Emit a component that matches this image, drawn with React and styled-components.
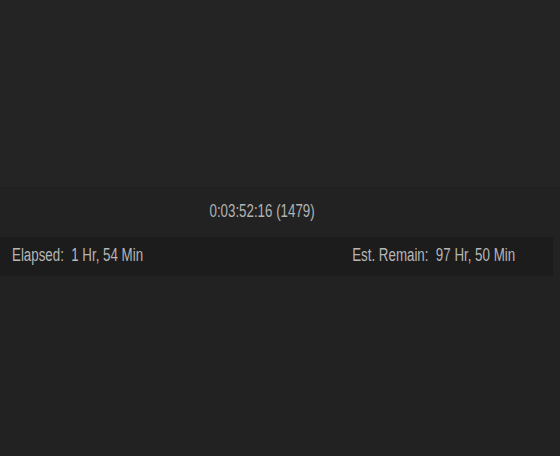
import React from "react";
import styled, { createGlobalStyle } from "styled-components";

const GlobalStyle = createGlobalStyle`
  html, body {
    margin: 0;
    padding: 0;
    background: #242424;
  }
`;

const Page = styled.div`
  width: 560px;
  height: 456px;
  background: #242424;
  display: flex;
  flex-direction: column;
  font-family: "Liberation Sans", Arial, sans-serif;
  color: #b0b0b0;
  overflow: hidden;
`;

const Preview = styled.div`
  height: 187px;
  background: #242424;
  border-bottom: 1px solid #1e1e1e;
`;

const Panel = styled.div`
  background: #222222;
  display: flex;
  flex-direction: column;
  flex: 1;
`;

const Timecode = styled.div`
  height: 49px;
  display: flex;
  align-items: center;
  justify-content: center;
  padding: 0 35px 3px 0;
  box-sizing: border-box;
  font-size: 18px;
  color: #b2b2b2;
`;

const StatusBar = styled.div`
  width: 553px;
  height: 39px;
  background: #1c1c1c;
  display: flex;
  align-items: center;
  justify-content: space-between;
  padding: 0 38px 3px 12px;
  box-sizing: border-box;
  font-size: 18px;
  color: #b6b6b6;
`;

const Narrow = styled.span`
  display: inline-block;
  white-space: pre;
  transform: scaleX(0.74);
  transform-origin: ${(p) => p.$origin || "center"};
`;

export default function App() {
  return (
    <>
      <GlobalStyle />
      <Page>
        <Preview />
        <Panel>
          <Timecode>
            <Narrow>0:03:52:16 (1479)</Narrow>
          </Timecode>
          <StatusBar>
            <Narrow $origin="left">Elapsed:  1 Hr, 54 Min</Narrow>
            <Narrow $origin="right">Est. Remain:  97 Hr, 50 Min</Narrow>
          </StatusBar>
        </Panel>
      </Page>
    </>
  );
}
